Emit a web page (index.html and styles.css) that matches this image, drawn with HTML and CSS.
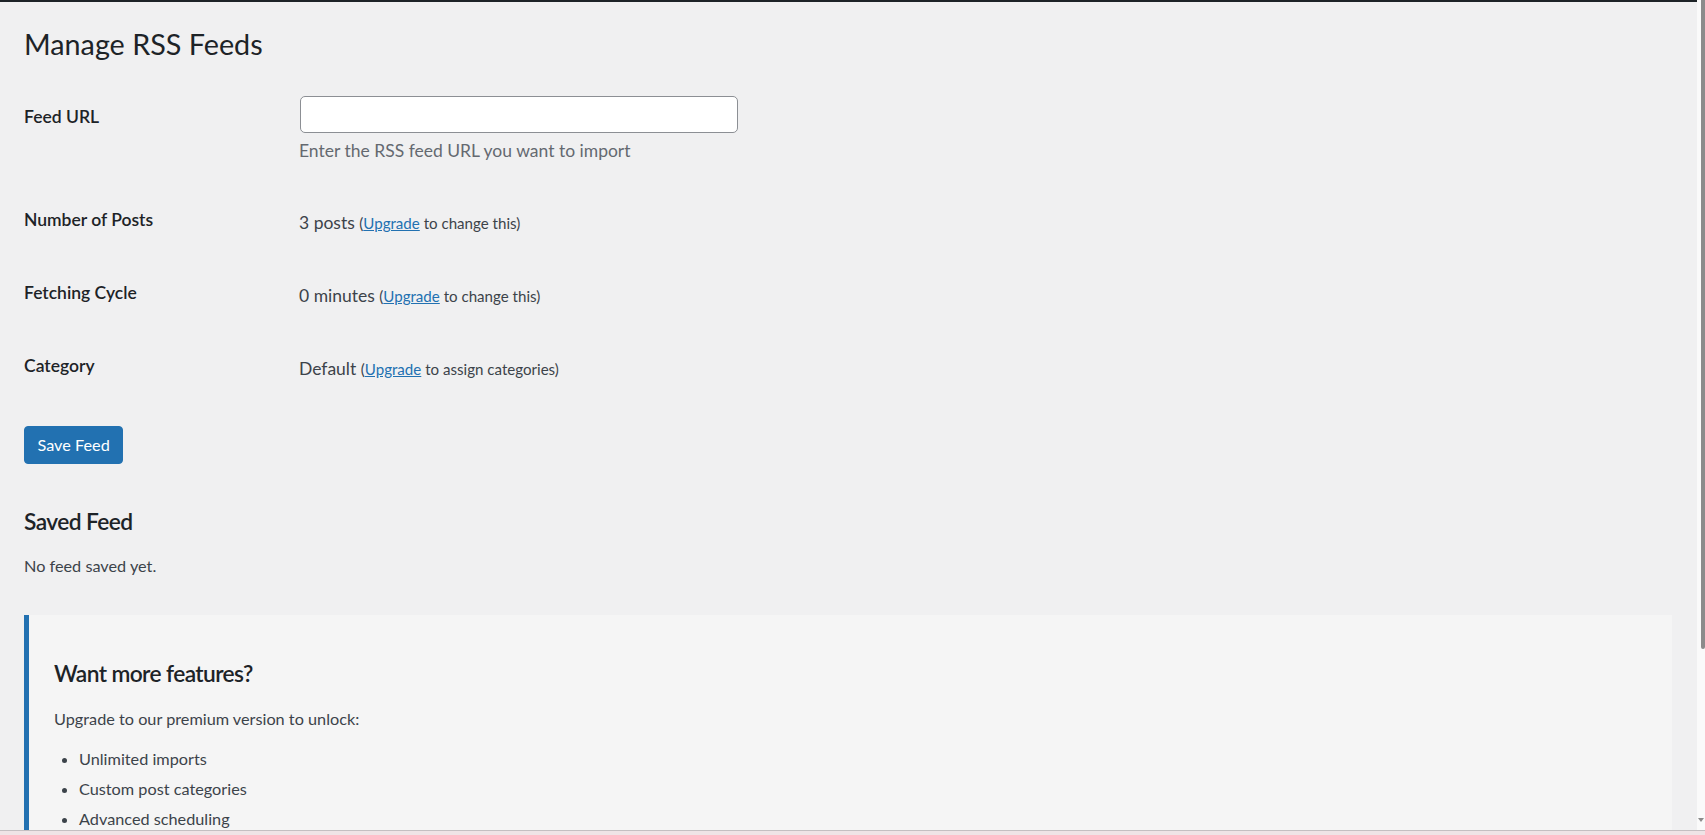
FILE: index.html
```html
<!DOCTYPE html>
<html lang="en">
<head>
<meta charset="utf-8">
<title>Manage RSS Feeds</title>
<link rel="stylesheet" href="styles.css">
</head>
<body>
<div class="window">
  <div class="viewport">
    <div class="adminbar-edge"></div>
    <div class="wrap">
      <h1 class="page-title">Manage RSS Feeds</h1>

      <form class="form-table">
        <div class="form-row form-row-url">
          <label class="form-label" for="feed-url">Feed URL</label>
          <div class="form-field field-url">
            <input id="feed-url" class="regular-text" type="text">
            <p class="description">Enter the RSS feed URL you want to import</p>
          </div>
        </div>
        <div class="form-row">
          <div class="form-label">Number of Posts</div>
          <div class="form-field field-text">3 posts <span class="note">(<a href="#">Upgrade</a> to change this)</span></div>
        </div>
        <div class="form-row">
          <div class="form-label">Fetching Cycle</div>
          <div class="form-field field-text">0 minutes <span class="note">(<a href="#">Upgrade</a> to change this)</span></div>
        </div>
        <div class="form-row">
          <div class="form-label">Category</div>
          <div class="form-field field-text field-last">Default <span class="note">(<a href="#">Upgrade</a> to assign categories)</span></div>
        </div>
        <div class="submit">
          <button type="button" class="button-primary">Save Feed</button>
        </div>
      </form>

      <h2 class="section-title">Saved Feed</h2>
      <p class="plain">No feed saved yet.</p>

      <div class="upsell">
        <h3 class="upsell-title">Want more features?</h3>
        <p class="plain upsell-text">Upgrade to our premium version to unlock:</p>
        <ul class="upsell-list">
          <li>Unlimited imports</li>
          <li>Custom post categories</li>
          <li>Advanced scheduling</li>
        </ul>
      </div>
    </div>
  </div>
  <div class="scrollbar">
    <div class="scroll-thumb"></div>
    <div class="scroll-arrow"></div>
  </div>
</div>
<div class="window-edge"></div>
</body>
</html>
```

FILE: styles.css
```css
html, body {
  margin: 0;
  padding: 0;
  height: 835px;
  overflow: hidden;
}

body {
  display: flex;
  flex-direction: column;
  font-family: Lato, "Liberation Sans", sans-serif;
  color: #3c434a;
  background: #f0f0f1;
}

.window {
  flex: 1;
  min-height: 0;
  display: flex;
}

.viewport {
  flex: 1;
  min-width: 0;
  overflow: hidden;
  background: #f0f0f1;
}

.adminbar-edge {
  height: 2px;
  background: #1d2327;
}

.wrap {
  padding: 0 25px 0 24px;
}

.page-title {
  margin: 24px 0 0;
  font-size: 28.75px;
  line-height: 37.4px;
  font-weight: 400;
  color: #1d2327;
}

.form-table {
  margin: 16.6px 0 0;
}

.form-row {
  display: flex;
  align-items: flex-start;
}

.form-label {
  width: 275px;
  flex: none;
  padding: 25px 0;
  font-size: 17.5px;
  line-height: 23px;
  font-weight: 600;
  color: #1d2327;
}

.form-field {
  flex: 1;
  font-size: 17.5px;
  line-height: 23px;
  color: #3c434a;
}

.field-url {
  padding: 16px 0 21px;
}

.field-text {
  padding-top: 28px;
}

.regular-text {
  display: block;
  box-sizing: border-box;
  width: 438px;
  height: 37px;
  margin: 0 0 0 1px;
  padding: 0 10px;
  border: 1px solid #8c8f94;
  border-radius: 5px;
  background: #fff;
  font: inherit;
}

.description {
  margin: 6px 0 0 0;
  font-size: 17.5px;
  line-height: 23px;
  color: #646970;
}

.note {
  font-size: 15.1px;
}

.note a {
  color: #2271b1;
  text-decoration: underline;
}

.submit {
  margin-top: 24px;
}

.button-primary {
  display: block;
  height: 38px;
  padding: 0 12.5px;
  border: 1px solid #2271b1;
  border-radius: 4px;
  background: #2271b1;
  color: #fff;
  font-family: inherit;
  font-size: 16.25px;
  line-height: 36px;
}

.section-title {
  margin: 43.4px 0 0;
  font-size: 22.75px;
  line-height: 29.6px;
  font-weight: 600;
  letter-spacing: -0.6px;
  color: #1d2327;
}

.plain {
  margin: 17.5px 0 0;
  font-size: 16.25px;
  line-height: 24.4px;
  color: #3c434a;
}

.upsell {
  margin-top: 36.6px;
  padding: 25px 25px 25px 25px;
  border-left: 5px solid #2271b1;
  background: #f5f5f5;
}

.upsell-title {
  margin: 18.6px 0 0;
  font-size: 22.75px;
  line-height: 29.6px;
  font-weight: 600;
  letter-spacing: -0.6px;
  color: #1d2327;
}

.upsell-text {
  margin-top: 18.5px;
}

.upsell-list {
  margin: 15.6px 0 0;
  padding-left: 25px;
  list-style: disc;
}

.upsell-list li {
  margin-bottom: 5.6px;
  font-size: 16.25px;
  line-height: 24.4px;
  color: #3c434a;
}

.scrollbar {
  width: 8px;
  flex: none;
  display: flex;
  flex-direction: column;
  justify-content: space-between;
  align-items: flex-end;
  background: #fafafa;
}

.scroll-thumb {
  width: 4px;
  height: 649px;
  background: #8b8b8b;
  border-radius: 0 0 2px 2px;
}

.scroll-arrow {
  width: 0;
  height: 0;
  margin: 0 1px 8px 0;
  border-left: 3px solid transparent;
  border-right: 3px solid transparent;
  border-top: 4px solid #8b8b8b;
}

.window-edge {
  flex: none;
  height: 4px;
  border-top: 1px solid #c4bfc1;
  background: #efe4e6;
}
```
